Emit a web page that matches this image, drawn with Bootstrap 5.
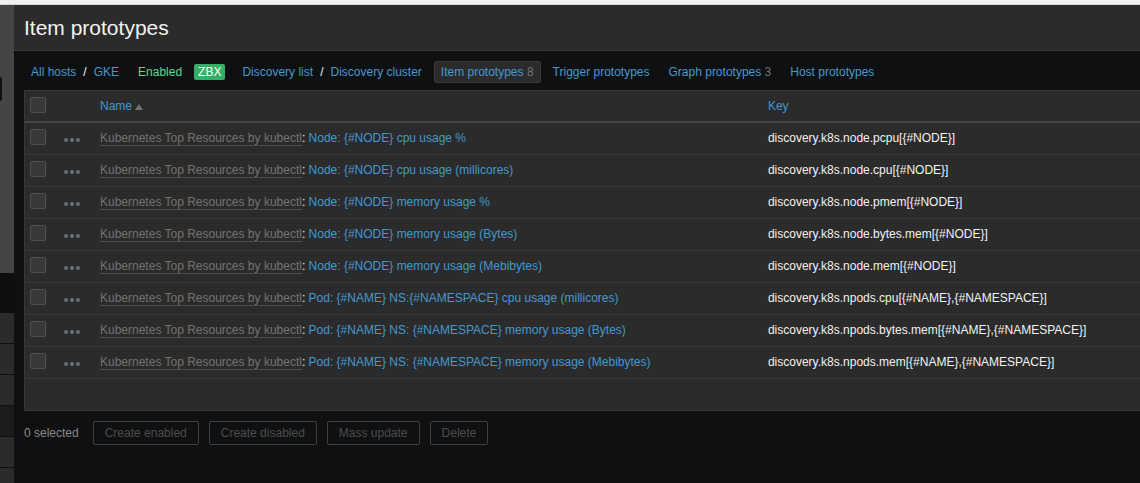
<!DOCTYPE html>
<html lang="en">
<head>
<meta charset="utf-8">
<meta name="viewport" content="width=device-width, initial-scale=1">
<title>Item prototypes</title>
<link href="https://cdn.jsdelivr.net/npm/bootstrap@5.3.0/dist/css/bootstrap.min.css" rel="stylesheet">
<script src="https://cdn.jsdelivr.net/npm/bootstrap@5.3.0/dist/js/bootstrap.bundle.min.js" defer></script>
<style>
body{background:#0e1012;color:#f2f2f2;font:12px/16px "Liberation Sans",Arial,sans-serif}
a{color:#4698cf;text-decoration:none}
a:hover{color:#6cb4de}
.top-strip{height:5px;background:#f1f1f1;border-bottom:1px solid #d3d6da}
.shell{min-height:calc(100vh - 5px)}
.side{width:14px;background:#2b2b2b}
.side-head{height:268px;background:#454545;padding-top:72px}
.side-search{width:2px;height:24px;background:#0e1012;border-radius:0 2px 2px 0}
.side-active{height:40px;background:#0e0e0e}
.side-item{height:31px;border-bottom:1px solid #0e1012}
.side-item.sel{background:#1c1c1c}
.page-head{height:46px;padding-left:10px;background:#2b2b2b;border-bottom:1px solid #383838}
.page-head h1{font-size:21px;line-height:24px}
.content{padding-left:10px}
.crumbs{height:39px;gap:5px;padding-top:2px}
.crumbs li{border:1px solid transparent;border-radius:2px;padding:2px 6px}
.crumbs li.tab{background:#2b2b2b;border-color:#383838}
.crumbs li.zbx{background:#34af67;color:#fff;border:0;padding:0 4px;margin-right:5px}
.sep{padding:0 7px}
a.ok{color:#59db8f}
.muted{color:#737373}
.list{background:#2b2b2b;border:1px solid #383838;border-right:0}
.list table{table-layout:fixed}
.list th,.list td{height:32px;padding:0 5px;vertical-align:middle;white-space:nowrap;border-bottom:1px solid #383838;font-weight:400}
.list th:last-child,.list td:last-child{padding-left:7px}
.list thead th{height:31px;border-bottom:2px solid #454545}
.c-check{width:34px}.c-menu{width:36px}.c-key{width:34%}
.list .form-check-input{display:block;width:16px;height:16px;margin:0 0 2px;border-radius:2px;background-color:#383838;border-color:#4f4f4f}
.list .dots{display:block;border:0;background:none;padding:4px 0 0;line-height:0}
.tpl{color:#737373;border-bottom:1px solid #475054}
a.tpl:hover{color:#999}
.list tfoot td{border:0}
.actions{gap:10px;padding-top:10px}
.picked{color:#8a8a8a}
.act{background:none;border:1px solid #404040;border-radius:2px;height:24px;padding:0 11px}
.act:disabled{color:#4d4d4d}
.arrow{border:4px solid transparent;border-top:0;border-bottom:6px solid #737373;display:inline-block;margin-left:3px}
</style>
</head>
<body>
<div class="top-strip"></div>
<div class="shell d-flex">
  <aside class="side flex-shrink-0">
    <div class="side-head"><div class="side-search"></div></div>
    <div class="side-active"></div>
    <div class="side-item"></div><div class="side-item"></div><div class="side-item"></div>
    <div class="side-item sel"></div><div class="side-item"></div>
  </aside>
  <main class="flex-grow-1">
    <header class="page-head d-flex align-items-center"><h1 class="fw-normal m-0">Item prototypes</h1></header>
    <div class="content">
      <nav aria-label="Breadcrumb">
        <ul class="crumbs list-unstyled d-flex align-items-center m-0 text-nowrap">
          <li><a href="#">All hosts</a><span class="sep">/</span><a href="#">GKE</a></li>
          <li><a href="#" class="ok">Enabled</a></li>
          <li class="zbx">ZBX</li>
          <li><a href="#">Discovery list</a><span class="sep">/</span><a href="#">Discovery cluster</a></li>
          <li class="tab"><a href="#" aria-current="page">Item prototypes</a> <span class="muted">8</span></li>
          <li><a href="#">Trigger prototypes</a></li>
          <li><a href="#">Graph prototypes</a> <span class="muted">3</span></li>
          <li><a href="#">Host prototypes</a></li>
        </ul>
      </nav>
      <div class="list">
        <table class="w-100">
          <colgroup><col class="c-check"><col class="c-menu"><col><col class="c-key"></colgroup>
          <thead>
            <tr><th><input class="form-check-input" type="checkbox" aria-label="Select all"></th><th></th><th><a href="#">Name<span class="arrow"></span></a></th><th><a href="#">Key</a></th></tr>
          </thead>
          <tbody id="rows"></tbody>
          <tfoot><tr><td colspan="4"></td></tr></tfoot>
        </table>
      </div>
      <div class="actions d-flex align-items-center">
        <span class="picked me-1">0 selected</span>
        <button class="act" type="button" disabled>Create enabled</button>
        <button class="act" type="button" disabled>Create disabled</button>
        <button class="act" type="button" disabled>Mass update</button>
        <button class="act" type="button" disabled>Delete</button>
      </div>
    </div>
  </main>
</div>
<script>
const items = [
  ['Node: {#NODE} cpu usage %', 'node.pcpu[{#NODE}]'],
  ['Node: {#NODE} cpu usage (millicores)', 'node.cpu[{#NODE}]'],
  ['Node: {#NODE} memory usage %', 'node.pmem[{#NODE}]'],
  ['Node: {#NODE} memory usage (Bytes)', 'node.bytes.mem[{#NODE}]'],
  ['Node: {#NODE} memory usage (Mebibytes)', 'node.mem[{#NODE}]'],
  ['Pod: {#NAME} NS:{#NAMESPACE} cpu usage (millicores)', 'npods.cpu[{#NAME},{#NAMESPACE}]'],
  ['Pod: {#NAME} NS: {#NAMESPACE} memory usage (Bytes)', 'npods.bytes.mem[{#NAME},{#NAMESPACE}]'],
  ['Pod: {#NAME} NS: {#NAMESPACE} memory usage (Mebibytes)', 'npods.mem[{#NAME},{#NAMESPACE}]']
];
document.getElementById('rows').innerHTML = items.map(([name, key]) => `<tr>
  <td><input class="form-check-input" type="checkbox" aria-label="${name}"></td>
  <td><button class="dots" type="button" aria-label="Menu"><svg width="16" height="4" fill="#61717a"><circle cx="2" cy="2" r="2"/><circle cx="8" cy="2" r="2"/><circle cx="14" cy="2" r="2"/></svg></button></td>
  <td><a href="#" class="tpl">Kubernetes Top Resources by kubectl</a>: <a href="#">${name}</a></td>
  <td>discovery.k8s.${key}</td></tr>`).join('');
</script>
</body>
</html>
